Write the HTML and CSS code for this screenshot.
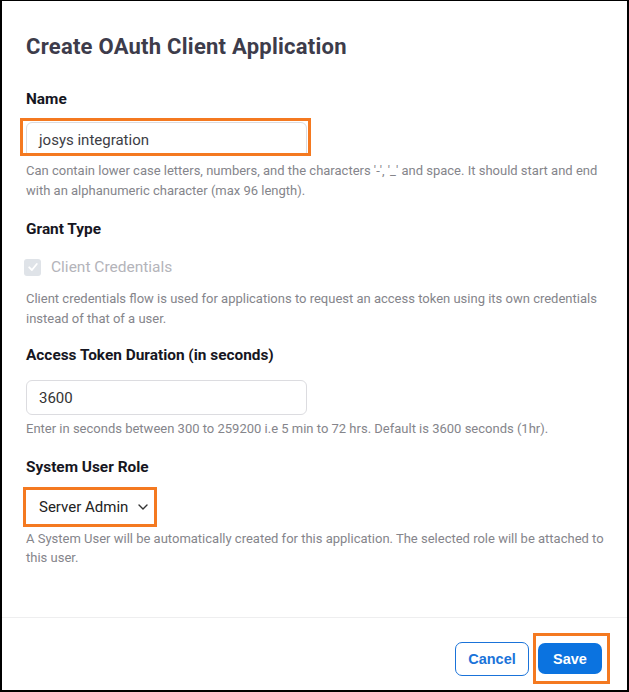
FILE: index.html
```html
<!DOCTYPE html>
<html>
<head>
<meta charset="utf-8">
<link rel="stylesheet" href="styles.css">
</head>
<body>
<div class="modal">
  <div class="content">
    <h1 class="title">Create OAuth Client Application</h1>

    <div class="field f-name">
      <div class="label">Name</div>
      <div class="hl hl-name">
        <div class="input input-name">josys integration</div>
      </div>
      <div class="hint">Can contain lower case letters, numbers, and the characters '-', '_' and space. It should start and end with an alphanumeric character (max 96 length).</div>
    </div>

    <div class="field f-grant">
      <div class="label">Grant Type</div>
      <div class="check-row">
        <span class="checkbox">
          <svg width="12" height="12" viewBox="0 0 12 12"><path d="M2.2 6.3 L4.9 9 L9.8 3" fill="none" stroke="#fff" stroke-width="1.8" stroke-linecap="round" stroke-linejoin="round"/></svg>
        </span>
        <span class="check-label">Client Credentials</span>
      </div>
      <div class="hint">Client credentials flow is used for applications to request an access token using its own credentials instead of that of a user.</div>
    </div>

    <div class="field f-dur">
      <div class="label">Access Token Duration (in seconds)</div>
      <div class="input input-dur">3600</div>
      <div class="hint">Enter in seconds between 300 to 259200 i.e 5 min to 72 hrs. Default is 3600 seconds (1hr).</div>
    </div>

    <div class="field f-role">
      <div class="label">System User Role</div>
      <div class="hl hl-select">
        <div class="select">Server Admin
          <svg class="chev" width="10" height="6" viewBox="0 0 10 6"><path d="M1 1 L5 5 L9 1" fill="none" stroke="#333" stroke-width="1.4" stroke-linecap="round" stroke-linejoin="round"/></svg>
        </div>
      </div>
      <div class="hint">A System User will be automatically created for this application. The selected role will be attached to this user.</div>
    </div>
  </div>

  <div class="footer">
    <button class="btn btn-cancel">Cancel</button>
    <div class="hl hl-save"><button class="btn btn-save">Save</button></div>
  </div>
</div>
</body>
</html>
```

FILE: styles.css
```css
html, body {
  margin: 0;
  padding: 0;
  background: #fff;
}
body {
  width: 629px;
  height: 692px;
  font-family: Roboto, "Liberation Sans", sans-serif;
}
.modal {
  box-sizing: border-box;
  width: 629px;
  height: 692px;
  border-top: 1px solid #000;
  border-left: 2px solid #000;
  border-right: 2px solid #000;
  border-bottom: 2px solid #000;
  display: flex;
  flex-direction: column;
}
.content {
  padding: 32px 0 0 24px;
  flex: 1;
}
.title {
  margin: 0 0 28px 0;
  font-size: 22px;
  letter-spacing: 0.25px;
  font-weight: 700;
  color: #3d3c4b;
  line-height: 28px;
}
.label {
  font-size: 15.4px;
  font-weight: 700;
  color: #161622;
  line-height: 20px;
}
.hint {
  font-size: 13px;
  color: #85858b;
  line-height: 19.5px;
  width: 580px;
}
.f-grant { margin-top: 19px; }
.f-dur { margin-top: 17px; }
.f-role { margin-top: 18px; }

.hl {
  border: 3px solid #f47920;
  display: inline-block;
  box-sizing: border-box;
  vertical-align: top;
}
.hl-name {
  display: block;
  width: 291px;
  height: 38px;
  margin: 9px 0 5px -6px;
  padding: 1px 0 0 3px;
  overflow: hidden;
}
.input {
  box-sizing: border-box;
  border: 1px solid #dcdce0;
  border-radius: 6px;
  font-size: 15px;
  color: #3d3d45;
  padding-left: 12px;
  display: flex;
  align-items: center;
  background: #fff;
}
.input-name {
  width: 281px;
  height: 36px;
}
.input-dur {
  width: 281px;
  height: 35px;
  margin: 15px 0 4px 0;
  color: #333;
}
.check-row {
  display: flex;
  align-items: center;
  height: 20px;
  margin: 18px 0 12px -2px;
}
.checkbox {
  width: 17px;
  height: 17px;
  border-radius: 3px;
  background: #dfe3e8;
  display: flex;
  align-items: center;
  justify-content: center;
  margin-right: 10px;
}
.check-label {
  font-size: 15.5px;
  color: #b4b4ba;
}
.hl-select {
  display: block;
  width: 134px;
  height: 40px;
  margin: 10px 0 2px -3px;
}
.select {
  box-sizing: border-box;
  height: 34px;
  font-size: 15px;
  color: #222;
  display: flex;
  align-items: center;
  padding-left: 13px;
  gap: 10px;
}
.chev {
  margin-top: 1px;
}
.footer {
  border-top: 1px solid #eeeeef;
  height: 73px;
  box-sizing: border-box;
  display: flex;
  align-items: flex-start;
  justify-content: flex-end;
  padding: 15px 17px 0 0;
}
.btn {
  font-family: "Liberation Sans", Arial, sans-serif;
  font-weight: 700;
  font-size: 14.5px;
  border-radius: 7px;
  cursor: pointer;
}
.btn-cancel {
  width: 74px;
  height: 34px;
  margin: 9px 4px 0 0;
  background: #fff;
  border: 1px solid #1a73d9;
  color: #1a73d9;
}
.hl-save {
  padding: 7px 5px 7px 2px;
}
.btn-save {
  width: 64px;
  height: 31px;
  background: #0b73e0;
  border: none;
  color: #fff;
  display: block;
}
```
